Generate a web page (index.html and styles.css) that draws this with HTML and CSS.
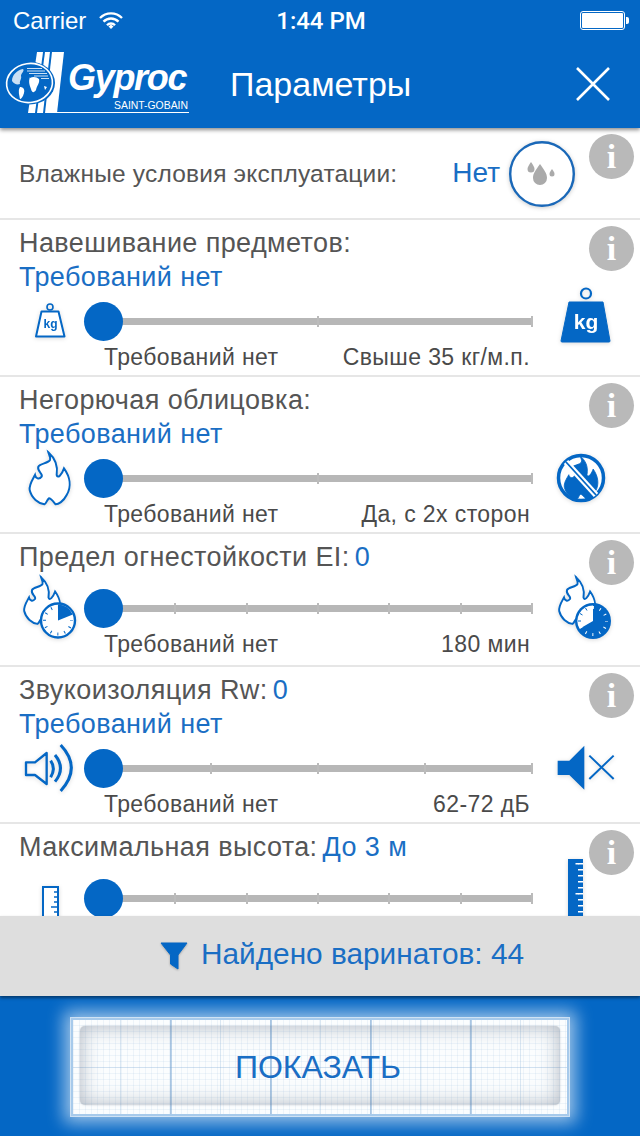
FILE: index.html
```html
<!DOCTYPE html>
<html lang="ru">
<head>
    <meta charset="UTF-8">
    <meta name="viewport" content="width=device-width, initial-scale=1.0">
    <title>Параметры</title>
    <link rel="stylesheet" href="styles.css">
</head>
<body>
    <svg class="defs" width="0" height="0">
        <defs>
            <path id="flame" d="M100 22C120 40 130 60 125 90C128 102 140 90 147 70C165 95 170 125 155 150C145 170 130 178 122 178C115 170 108 160 102 160C95 165 95 175 88 178C70 175 50 160 44 135C42 118 52 105 60 90C62 100 72 105 80 95C85 85 65 80 70 65C75 55 100 55 105 45C108 38 102 30 100 22Z"/>
        </defs>
    </svg>

    <header class="top">
        <div class="status">
            <div class="carrier">Carrier
                <svg class="wifi" width="24" height="17" viewBox="0 0 24 17">
                    <path d="M1 6A15.500 15.500 0 0 1 23 6M4.500 9.700A10.500 10.500 0 0 1 19.500 9.700M8 13.200A5.500 5.500 0 0 1 16 13.200" fill="none" stroke="#fff" stroke-width="2.400"/>
                    <path d="M9.500 14.500L12 12.500L14.500 14.500L12 17Z" fill="#fff"/>
                </svg>
            </div>
            <div class="time">1:44 PM</div>
            <div class="battery"><span></span></div>
        </div>
        <div class="nav">
            <svg class="logo" width="190" height="80" viewBox="0 0 190 80">
                <g fill="#fff">
                    <path d="M37 12H43L35 73H28Z"/>
                    <path d="M45 12H50L43 73H37Z"/>
                    <path d="M52 12H64L57 73H45Z"/>
                    <rect x="57" y="72" width="132" height="1"/>
                </g>
                <ellipse cx="29.500" cy="43" rx="25.500" ry="21.500" fill="#0467c5"/>
                <ellipse cx="29.500" cy="43" rx="23" ry="19.500" fill="#0467c5" stroke="#fff" stroke-width="1.600" transform="rotate(-8 29.500 43)"/>
                <g fill="#fff">
                    <path d="M12 41C12 35 17 30 23 29C25 31 21 33 21 36C22 39 19 41 20 44C17 45 14 44 12 41Z" opacity=".8"/>
                    <path d="M20 47C23 47 25 49 24 53C23 57 21 59 20 59C19 55 18 50 20 47Z"/>
                    <path d="M30 38C33 36 37 37 39 39C40 43 37 45 36 50C34 53 32 53 31 49C30 46 28 42 30 37Z"/>
                    <path d="M27 28H42V29H27ZM27 30.500H45V31.500H27ZM29 33H47V34H29ZM34 35.500H48V36.500H34ZM41 38H49V39H41Z" opacity=".8"/>
                    <path d="M44 46L47 47L45 50Z"/>
                </g>
                <text class="logo-name" x="68" y="50">Gyproc</text>
                <text class="logo-sub" x="114" y="69" textLength="74" lengthAdjust="spacingAndGlyphs">SAINT-GOBAIN</text>
            </svg>
            <div class="title">Параметры</div>
            <svg class="close" width="36" height="36" viewBox="0 0 36 36">
                <path d="M2 2L34 34M34 2L2 34" stroke="#fff" stroke-width="2.600" fill="none"/>
            </svg>
        </div>
    </header>

    <main class="list">
        <section class="row row-wet">
            <div class="wet-label">Влажные условия эксплуатации:</div>
            <div class="wet-value">Нет</div>
            <div class="wet-icon">
                <svg width="66" height="66" viewBox="0 0 66 66">
                    <circle cx="33" cy="33" r="31.800" fill="#fff" stroke="#1a68b8" stroke-width="2.400"/>
                    <g fill="#aaa">
                        <path d="M31 23C35 29 38 32 38 37A7 7 0 0 1 24 37C24 32 27 29 31 23Z"/>
                        <path d="M22 21C24 24 25.500 26 25.500 28A3.500 3.500 0 0 1 18.500 28C18.500 26 20 24 22 21Z"/>
                        <path d="M43 28C44.500 30 45.500 31.500 45.500 33A2.500 2.500 0 0 1 40.500 33C40.500 31.500 41.500 30 43 28Z"/>
                    </g>
                </svg>
            </div>
            <div class="info">i</div>
        </section>

        <section class="row">
            <div class="label">Навешивание предметов:</div>
            <div class="value">Требований нет</div>
            <div class="slider">
                <div class="ico-left">
                    <svg class="ico" width="100" height="60" viewBox="0 0 100 60">
                        <circle cx="50" cy="16" r="3" fill="none" stroke="#0467c5" stroke-width="1.600"/>
                        <path d="M41.500 20.500H58.500L64.500 45.500H36Z" fill="#fff" stroke="#0467c5" stroke-width="2" stroke-linejoin="round"/>
                        <text class="kg-small" x="50.500" y="37" text-anchor="middle">kg</text>
                    </svg>
                </div>
                <div class="track"><i></i><i></i><i></i><span class="thumb"></span></div>
                <div class="ico-right">
                    <svg class="ico" width="107" height="60" viewBox="0 0 107 60">
                        <circle cx="53" cy="2.500" r="5" fill="none" stroke="#0467c5" stroke-width="2.200"/>
                        <path d="M36 11H70L77 50Q77 51 76 51H29Q28 51 28 50Z" fill="#0467c5" stroke="#0467c5" stroke-linejoin="round"/>
                        <text class="kg-big" x="53" y="38" text-anchor="middle">kg</text>
                    </svg>
                </div>
            </div>
            <div class="caps"><span>Требований нет</span><span>Свыше 35 кг/м.п.</span></div>
            <div class="info">i</div>
        </section>

        <section class="row">
            <div class="label">Негорючая облицовка:</div>
            <div class="value">Требований нет</div>
            <div class="slider">
                <div class="ico-left">
                    <svg class="ico" width="100" height="60" viewBox="0 0 100 60">
                        <use href="#flame" transform="translate(15 -3) scale(.3333)" fill="#fff" stroke="#0467c5" stroke-width="6"/>
                    </svg>
                </div>
                <div class="track"><i></i><i></i><i></i><span class="thumb"></span></div>
                <div class="ico-right">
                    <svg class="ico" width="107" height="60" viewBox="0 0 107 60">
                        <circle cx="48" cy="30" r="22.500" fill="#fff" stroke="#0467c5" stroke-width="3.500"/>
                        <use href="#flame" transform="translate(19 1.500) scale(.28)" fill="#0467c5" stroke="#0467c5" stroke-width="3"/>
                        <path d="M33 14L63 47" stroke="#fff" stroke-width="6"/>
                        <path d="M33 14L63 47" stroke="#0467c5" stroke-width="1.800"/>
                    </svg>
                </div>
            </div>
            <div class="caps"><span>Требований нет</span><span>Да, с 2х сторон</span></div>
            <div class="info">i</div>
        </section>

        <section class="row row-short">
            <div class="label">Предел огнестойкости EI:<em>0</em></div>
            <div class="slider">
                <div class="ico-left">
                    <svg class="ico" width="100" height="60" viewBox="0 0 100 60">
                        <use href="#flame" transform="translate(11 -7.500) scale(.3)" fill="#fff" stroke="#0467c5" stroke-width="6.500"/>
                        <g transform="translate(58 42.500)">
                            <circle r="17" fill="#fff" stroke="#0467c5" stroke-width="2.400"/>
                            <path d="M0 0V-16A16 16 0 0 1 14.800 -6Z" fill="#0467c5"/>
                            <circle r="13.500" fill="none" stroke="#0467c5" stroke-width="3" stroke-dasharray="1 6.070" stroke-dashoffset=".5"/>
                        </g>
                    </svg>
                </div>
                <div class="track"><i></i><i></i><i></i><i></i><i></i><i></i><i></i><span class="thumb"></span></div>
                <div class="ico-right">
                    <svg class="ico" width="107" height="60" viewBox="0 0 107 60">
                        <use href="#flame" transform="translate(13 -7.500) scale(.3)" fill="#fff" stroke="#0467c5" stroke-width="6.500"/>
                        <g transform="translate(60 43)">
                            <circle r="18" fill="#0467c5"/>
                            <circle r="13.500" fill="none" stroke="#fff" stroke-width="3" stroke-dasharray="1 6.070" stroke-dashoffset=".5"/>
                            <path d="M0 0V-15.500A15.500 15.500 0 0 0 -13.400 7.800Z" fill="#fff"/>
                            <path d="M-13 -7.500L-10.500 -6M-7.500 -13L-6 -10.500M-15 0H-12" stroke="#0467c5" stroke-width="1"/>
                        </g>
                    </svg>
                </div>
            </div>
            <div class="caps"><span>Требований нет</span><span>180 мин</span></div>
            <div class="info">i</div>
        </section>

        <section class="row">
            <div class="label">Звукоизоляция Rw:<em>0</em></div>
            <div class="value">Требований нет</div>
            <div class="slider">
                <div class="ico-left">
                    <svg class="ico" width="100" height="60" viewBox="0 0 100 60">
                        <g transform="translate(0 -209) scale(.3333)" fill="none" stroke="#0467c5" stroke-width="7">
                            <path d="M78 700H105L140 672V765L105 738H78Z" stroke-linejoin="round"/>
                            <path d="M152 695Q168 718 152 745" stroke-width="9"/>
                            <path d="M165 678Q198 718 165 758" stroke-width="9"/>
                            <path d="M182 648Q246 716 182 786" stroke-width="9"/>
                        </g>
                    </svg>
                </div>
                <div class="track"><i></i><i></i><i></i><i></i><i></i><span class="thumb"></span></div>
                <div class="ico-right">
                    <svg class="ico" width="107" height="60" viewBox="0 0 107 60">
                        <g transform="translate(-32 -209) scale(.3333)">
                            <path d="M170 695H205L250 650V782L205 738H170Z" fill="#0467c5"/>
                            <path d="M265 680L338 750M338 680L265 750" stroke="#0467c5" stroke-width="6" fill="none"/>
                        </g>
                    </svg>
                </div>
            </div>
            <div class="caps"><span>Требований нет</span><span>62-72 дБ</span></div>
            <div class="info">i</div>
        </section>

        <section class="row row-short">
            <div class="label">Максимальная высота:<em>До 3 м</em></div>
            <div class="slider">
                <div class="ico-left">
                    <svg class="ico" width="100" height="60" viewBox="0 0 100 60">
                        <rect x="43" y="19" width="15" height="70" fill="#fff" stroke="#0467c5" stroke-width="2"/>
                        <path d="M54 24H58M54 29H58M54 34H58M51 39H58M54 44H58M54 49H58" stroke="#0467c5" stroke-width="1.500"/>
                    </svg>
                </div>
                <div class="track"><i></i><i></i><i></i><i></i><i></i><i></i><i></i><span class="thumb"></span></div>
                <div class="ico-right">
                    <svg class="ico" width="107" height="60" viewBox="0 0 107 60">
                        <rect x="35" y="-9" width="15" height="90" fill="#0467c5"/>
                        <line x1="47.500" y1="-5" x2="47.500" y2="80" stroke="#fff" stroke-width="5" stroke-dasharray="1.500 4.500"/>
                        <line x1="44" y1="-5" x2="44" y2="80" stroke="#fff" stroke-width="3" stroke-dasharray="1.500 28.500"/>
                    </svg>
                </div>
            </div>
            <div class="info">i</div>
        </section>
    </main>

    <div class="found">
        <svg class="funnel" width="28" height="28" viewBox="0 0 28 28">
            <path d="M1 1H27L18 13V27L10.500 22V13Z" fill="#0467c5" stroke="#0467c5" stroke-linejoin="round"/>
        </svg>
        <span class="found-text">Найдено варинатов: 44</span>
    </div>

    <footer class="action">
        <div class="show-btn">
            <div class="show-inner">ПОКАЗАТЬ</div>
        </div>
    </footer>
</body>
</html>
```

FILE: styles.css
```css
html, body {
    margin: 0;
    padding: 0;
}
body {
    width: 640px;
    height: 1136px;
    overflow: hidden;
    display: flex;
    flex-direction: column;
    background: #fff;
    font-family: "Liberation Sans", Arial, sans-serif;
    color: #555;
}
.defs {
    position: absolute;
}

/* top */
.top {
    flex: none;
    height: 128px;
    background: #0467c5;
    color: #fff;
    box-shadow: 0 2px 4px rgba(0, 0, 0, 0.45);
    position: relative;
    z-index: 3;
}
.status {
    height: 40px;
    box-sizing: border-box;
    padding: 1px 11px 0 13px;
    display: grid;
    grid-template-columns: 1fr auto 1fr;
    align-items: center;
}
.carrier {
    display: flex;
    align-items: center;
    gap: 13px;
    font-size: 24px;
}
.time {
    font-family: Roboto, sans-serif;
    font-weight: 500;
    font-size: 24px;
}
.battery {
    justify-self: end;
    width: 45px;
    height: 19px;
    box-sizing: border-box;
    border: 1px solid #fff;
    border-radius: 3px;
    padding: 1px;
    position: relative;
    margin-right: 4px;
}
.battery span {
    display: block;
    height: 100%;
    background: #fff;
    border-radius: 1px;
}
.battery::after {
    content: "";
    position: absolute;
    right: -5px;
    top: 5px;
    width: 3px;
    height: 7px;
    background: #fff;
    border-radius: 0 2px 2px 0;
}
.nav {
    height: 88px;
    display: flex;
    align-items: center;
}
.logo {
    flex: none;
    align-self: flex-start;
}
.logo-name {
    font-weight: bold;
    font-style: italic;
    font-size: 36px;
    letter-spacing: -1.300px;
    fill: #fff;
}
.logo-sub {
    font-size: 10.500px;
    fill: #fff;
}
.title {
    margin-left: 40px;
    font-size: 34px;
    color: #fff;
}
.close {
    margin-left: auto;
    margin-right: 29px;
}

/* list */
.list {
    flex: 1;
    min-height: 0;
    overflow: hidden;
}
.row {
    position: relative;
    box-sizing: border-box;
    height: 157px;
    padding-top: 6px;
    border-bottom: 2px solid #e6e6e6;
}
.row-short {
    height: 133px;
}
.row-short .slider {
    margin-top: 9px;
}
.row-wet {
    height: 92px;
    padding: 0 65px 0 19px;
    display: flex;
    align-items: center;
}
.wet-label {
    font-size: 24.500px;
    letter-spacing: 0.2px;
    margin-top: 2px;
}
.wet-value {
    margin-left: auto;
    margin-top: 0;
    font-size: 28px;
    color: #1a6ec4;
}
.wet-icon {
    margin-left: 9px;
    width: 66px;
    height: 66px;
    margin-top: 2px;
    filter: drop-shadow(0 1px 2px rgba(0, 0, 0, 0.2));
}
.label {
    height: 34px;
    line-height: 34px;
    padding-left: 19px;
    font-size: 27px;
    letter-spacing: 0.4px;
}
.label em {
    font-style: normal;
    color: #1a6ec4;
    margin-left: 5px;
}
.value {
    height: 34px;
    line-height: 34px;
    padding-left: 19px;
    font-size: 27px;
    letter-spacing: 0.4px;
    color: #1a6ec4;
}
.value + .slider {
    margin-top: 2px;
}

/* slider */
.slider {
    display: flex;
    align-items: center;
    height: 50px;
}
.ico-left {
    flex: none;
    width: 103px;
}
.ico-right {
    flex: none;
    width: 107px;
}
.ico {
    display: block;
    overflow: visible;
    filter: drop-shadow(0 1px 2px rgba(0, 0, 0, 0.15));
}
.kg-small {
    font-weight: bold;
    font-size: 12px;
    fill: #0467c5;
}
.kg-big {
    font-weight: bold;
    font-size: 21px;
    fill: #fff;
}
.track {
    flex: none;
    box-sizing: border-box;
    width: 430px;
    height: 7px;
    background: #b7b7b7;
    position: relative;
    display: flex;
    justify-content: space-between;
    align-items: center;
}
.track i {
    width: 2px;
    height: 11px;
    background: #bbb;
}
.thumb {
    position: absolute;
    left: -19px;
    top: -16px;
    width: 39px;
    height: 39px;
    border-radius: 50%;
    background: #0467c5;
}
.caps {
    height: 22px;
    line-height: 22px;
    display: flex;
    justify-content: space-between;
    padding: 0 110px 0 104px;
    font-size: 23px;
    letter-spacing: 0.4px;
    color: #4a4a4a;
}
.info {
    position: absolute;
    top: 6px;
    right: 6px;
    width: 45px;
    height: 45px;
    border-radius: 50%;
    background: #b9b9b9;
    color: #fff;
    font-family: "Liberation Serif", serif;
    font-weight: bold;
    font-size: 34px;
    line-height: 45px;
    text-align: center;
}

/* bottom */
.found {
    flex: none;
    height: 80px;
    background: #dedede;
    display: flex;
    align-items: center;
    justify-content: center;
    gap: 13px;
    padding-left: 44px;
    font-size: 29.800px;
    color: #1a6ec4;
    box-shadow: 0 2px 3px rgba(0, 0, 0, 0.45);
    position: relative;
    z-index: 2;
}
.found-text {
    margin-bottom: 5px;
}
.funnel {
    filter: drop-shadow(0 1px 1px rgba(0, 0, 0, 0.25));
}
.action {
    flex: none;
    height: 140px;
    background: #0467c5;
    padding-top: 21px;
    box-sizing: border-box;
}
.show-btn {
    box-sizing: border-box;
    width: 500px;
    height: 100px;
    margin: 0 auto;
    padding: 9px 10px;
    border: 3px solid rgba(255, 255, 255, 0.65);
    background-clip: padding-box;
    background-color: #fbfdfe;
    background-image:
        linear-gradient(90deg, rgba(120, 165, 210, 0.5) 2px, transparent 2px),
        linear-gradient(90deg, rgba(120, 165, 210, 0.25) 1px, transparent 1px),
        linear-gradient(0deg, rgba(120, 165, 210, 0.25) 1px, transparent 1px),
        linear-gradient(90deg, rgba(120, 165, 210, 0.1) 1px, transparent 1px),
        linear-gradient(0deg, rgba(120, 165, 210, 0.1) 1px, transparent 1px);
    background-size: 100px 100%, 50px 100%, 100% 50px, 6px 100%, 100% 6px;
    background-position: 97px 0, 47px 0, 0 -2px, 0 0, 0 0;
    box-shadow: 0 0 16px 6px rgba(255, 255, 255, 0.6);
}
.show-inner {
    height: 79px;
    box-sizing: border-box;
    padding: 3px 4px 0 0;
    border-radius: 5px;
    display: flex;
    align-items: center;
    justify-content: center;
    margin: -3px;
    font-size: 32px;
    color: #1a6ec4;
    box-shadow: inset 0 0 20px rgba(95, 110, 130, 0.5), 0 0 2px rgba(120, 130, 145, 0.4);
}
```
